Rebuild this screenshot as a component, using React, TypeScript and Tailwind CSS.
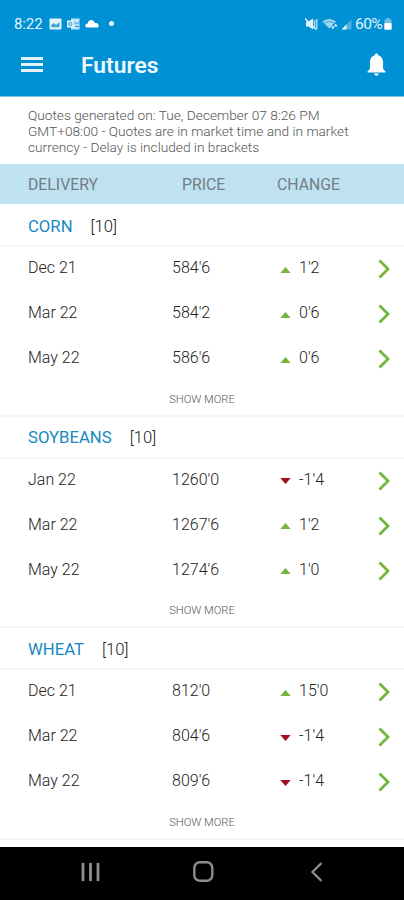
import React from "react";

interface Quote {
  month: string;
  price: string;
  change: string;
}

interface Commodity {
  name: string;
  delay: number;
  quotes: Quote[];
}

const commodities: Commodity[] = [
  {
    name: "CORN",
    delay: 10,
    quotes: [
      { month: "Dec 21", price: "584'6", change: "1'2" },
      { month: "Mar 22", price: "584'2", change: "0'6" },
      { month: "May 22", price: "586'6", change: "0'6" },
    ],
  },
  {
    name: "SOYBEANS",
    delay: 10,
    quotes: [
      { month: "Jan 22", price: "1260'0", change: "-1'4" },
      { month: "Mar 22", price: "1267'6", change: "1'2" },
      { month: "May 22", price: "1274'6", change: "1'0" },
    ],
  },
  {
    name: "WHEAT",
    delay: 10,
    quotes: [
      { month: "Dec 21", price: "812'0", change: "15'0" },
      { month: "Mar 22", price: "804'6", change: "-1'4" },
      { month: "May 22", price: "809'6", change: "-1'4" },
    ],
  },
];

const StatusBar: React.FC = () => (
  <div className="flex h-12 items-center pl-[14px] pr-[12px] text-[#e3f3fb]">
    <span className="w-[35px] text-[15px] tracking-[-0.1px]">8:22</span>
    <svg className="h-[12px] w-[13px]" viewBox="0 0 13 12">
      <rect x="0.5" y="0.5" width="12" height="11" rx="1" fill="currentColor" />
      <path d="M2.3 9.3V7l2.500-2 2.300 2 3.400-3v5.300z" fill="#3ba4d8" />
    </svg>
    <svg className="ml-[5px] h-[12px] w-[13px]" viewBox="0 0 13 12">
      <path d="M4 0.5h8.5v11H4z" fill="currentColor" opacity="0.85" />
      <path d="M0 2.5h6.5v7H0z" fill="currentColor" />
      <circle cx="3.300" cy="6" r="1.600" fill="none" stroke="#2699d3" />
      <path d="M7 4l2.500 2L12.500 4M8 8.500h4" fill="none" stroke="#2699d3" />
    </svg>
    <svg className="mb-[2px] ml-[5px] h-[9px] w-[14px]" viewBox="0 0 14 9">
      <path
        d="M2.500 8.500C1 8.500 0.300 7.600 0.300 6.500S1.400 4.700 2.700 4.500C3 2.300 4.400 1 6.200 1c1.700 0 2.900 1 3.400 2.800C12 3.800 13.700 5 13.700 7c0 1-0.700 1.500-1.500 1.500z"
        fill="white"
      />
    </svg>
    <span className="mb-px ml-[10px] h-[5px] w-[5px] rounded-full bg-[#e3f3fb]" />

    <svg className="ml-auto h-[12px] w-[13px]" viewBox="0 0 13 12">
      <path d="M1 3.500h2.500L8 0.500v11L3.500 8.500H1z" fill="currentColor" />
      <path d="M0 0.500l11 11" stroke="currentColor" strokeWidth="1.400" />
      <path d="M9.500 2v8M11.700 1v10.500" stroke="currentColor" strokeWidth="1.500" opacity="0.750" />
    </svg>
    <svg className="ml-[4px] h-[12px] w-[16px]" viewBox="0 0 16 12">
      <path d="M0.500 3.500C4.500 0 10 0 14 3.500L7.300 10.500z" fill="currentColor" opacity="0.700" />
      <path d="M2.500 5.300c3-2.300 6.500-2.300 9.500 0" fill="none" stroke="#0090d4" strokeWidth="0.700" />
      <path d="M9 8.500l1.800 3 1.700-3zM12 8.500L13.700 5.500l1.800 3z" fill="currentColor" />
    </svg>
    <svg className="ml-[3px] h-[11px] w-[11px]" viewBox="0 0 11 11">
      <path d="M0.500 10.500L10.500 0.500v10z" fill="currentColor" opacity="0.350" />
      <path d="M0.500 10.500L5.500 5.500v5z" fill="currentColor" />
    </svg>
    <span className="ml-[3px] mt-px text-[15.5px] tracking-[-0.6px]">60%</span>
    <svg className="ml-[2px] h-[12px] w-[8px]" viewBox="0 0 8 12">
      <path d="M2.500 0h3v1.500h2V5h-7V1.500h2z" fill="currentColor" opacity="0.500" />
      <rect x="0.300" y="5" width="7.400" height="6.700" rx="0.800" fill="white" />
    </svg>
  </div>
);

const Header: React.FC = () => (
  <header className="h-24 bg-[#0090d4]">
    <StatusBar />
    <div className="flex h-[36px] items-center pl-[21px] pr-[18px]">
      <div className="mb-[3px] flex w-[22px] flex-col gap-[3px]">
        <div className="h-[3px] bg-[#e3f3fb]" />
        <div className="h-[3px] bg-[#e3f3fb]" />
        <div className="h-[3px] bg-[#e3f3fb]" />
      </div>
      <h1 className="ml-[38px] mt-px text-[22.8px] font-semibold text-[#eef8fd]">Futures</h1>
      <svg className="mb-[3px] ml-auto h-[23px] w-[19px]" viewBox="0 0 19 23">
        <path
          d="M9.500 0.500c1.100 0 1.700 0.700 1.700 1.700 3.100 0.800 4.900 3.400 4.900 7V16l2.400 2.500v1H0.500v-1L2.900 16V9.200c0-3.600 1.800-6.200 4.900-7 0-1 0.600-1.700 1.700-1.700zM7.300 20.500h4.400c0 1.300-0.900 2.200-2.200 2.200s-2.200-0.900-2.200-2.200z"
          fill="white"
        />
      </svg>
    </div>
  </header>
);

const ChangeArrow: React.FC<{ down: boolean }> = ({ down }) => (
  <svg className="mt-[3px] h-[6px] w-[11px]" viewBox="0 0 11 6">
    {down ? (
      <path d="M0.300 0h10.400L5.500 6z" fill="#a30d1c" />
    ) : (
      <path d="M0.300 6h10.400L5.500 0z" fill="#74b53c" />
    )}
  </svg>
);

const QuoteRow: React.FC<{ quote: Quote }> = ({ quote }) => {
  const { month, price, change } = quote;

  return (
    <div className="flex h-[45px] items-center pl-7 pr-[14px] text-[16px] font-light text-[#222]">
      <div className="flex flex-1 items-center pb-[3px]">
        <span className="w-[144px]">{month}</span>
        <span className="w-[108px]">{price}</span>
        <ChangeArrow down={change.startsWith("-")} />
        <span className="ml-[8px]">{change}</span>
      </div>
      <svg className="mb-px h-[20px] w-[12px]" viewBox="0 0 12 20">
        <path d="M1.500 1.500L10 10l-8.500 8.500" fill="none" stroke="#74b53c" strokeWidth="2.800" />
      </svg>
    </div>
  );
};

const CommoditySection: React.FC<{ commodity: Commodity }> = ({ commodity }) => (
  <section className="h-[211.5px]">
    <div className="flex h-[42px] items-center gap-[18px] border-b-2 border-[#f5f5f5] pl-7 pt-[3px] text-[16.7px]">
      <h2 className="text-[#1689c2]">{commodity.name}</h2>
      <span className="font-light text-[#222]">[{commodity.delay}]</span>
    </div>
    {commodity.quotes.map((quote) => (
      <QuoteRow key={quote.month} quote={quote} />
    ))}
    <div className="flex h-[34.5px] items-center justify-center border-b-2 border-[#f5f5f5] pt-[4px] text-[11.2px] font-light text-[#555]">
      SHOW MORE
    </div>
  </section>
);

const NavigationBar: React.FC = () => (
  <nav className="flex h-[53px] items-center bg-black pb-[3px] pl-[81px]">
    <svg className="h-[20px] w-[19px]" viewBox="0 0 19 20">
      <path d="M2 1v18M9.500 1v18M17 1v18" stroke="#8e8e8e" strokeWidth="2.800" />
    </svg>
    <svg className="ml-[93px] h-[22px] w-[22px]" viewBox="0 0 22 22">
      <rect x="1.300" y="1.300" width="18" height="18.500" rx="5.500" fill="none" stroke="#8e8e8e" strokeWidth="2.400" />
    </svg>
    <svg className="ml-[95px] h-[20px] w-[13px]" viewBox="0 0 13 20">
      <path d="M11.500 1L2.500 10l9 9" fill="none" stroke="#8e8e8e" strokeWidth="2.300" />
    </svg>
  </nav>
);

const App: React.FC = () => {
  return (
    <div className="flex h-[900px] w-[404px] flex-col overflow-hidden bg-white font-['Roboto',sans-serif]">
      <Header />
      <div className="h-[68px] border-t border-[#7cc3e6] pl-7 pt-[10px] text-[13.7px] font-light leading-4 text-[#555]">
        <p>Quotes generated on: Tue, December 07 8:26 PM</p>
        <p>GMT+08:00 - Quotes are in market time and in market</p>
        <p>currency - Delay is included in brackets</p>
      </div>
      <div className="flex h-10 items-center bg-[#bfe2f2] pl-7 pt-[2px] text-[15.8px] text-[#737d84]">
        <span className="w-[154px]">DELIVERY</span>
        <span className="w-[95px]">PRICE</span>
        <span>CHANGE</span>
      </div>
      <main className="flex-1 pt-px">
        {commodities.map((commodity) => (
          <CommoditySection key={commodity.name} commodity={commodity} />
        ))}
      </main>
      <NavigationBar />
    </div>
  );
};

export default App;
